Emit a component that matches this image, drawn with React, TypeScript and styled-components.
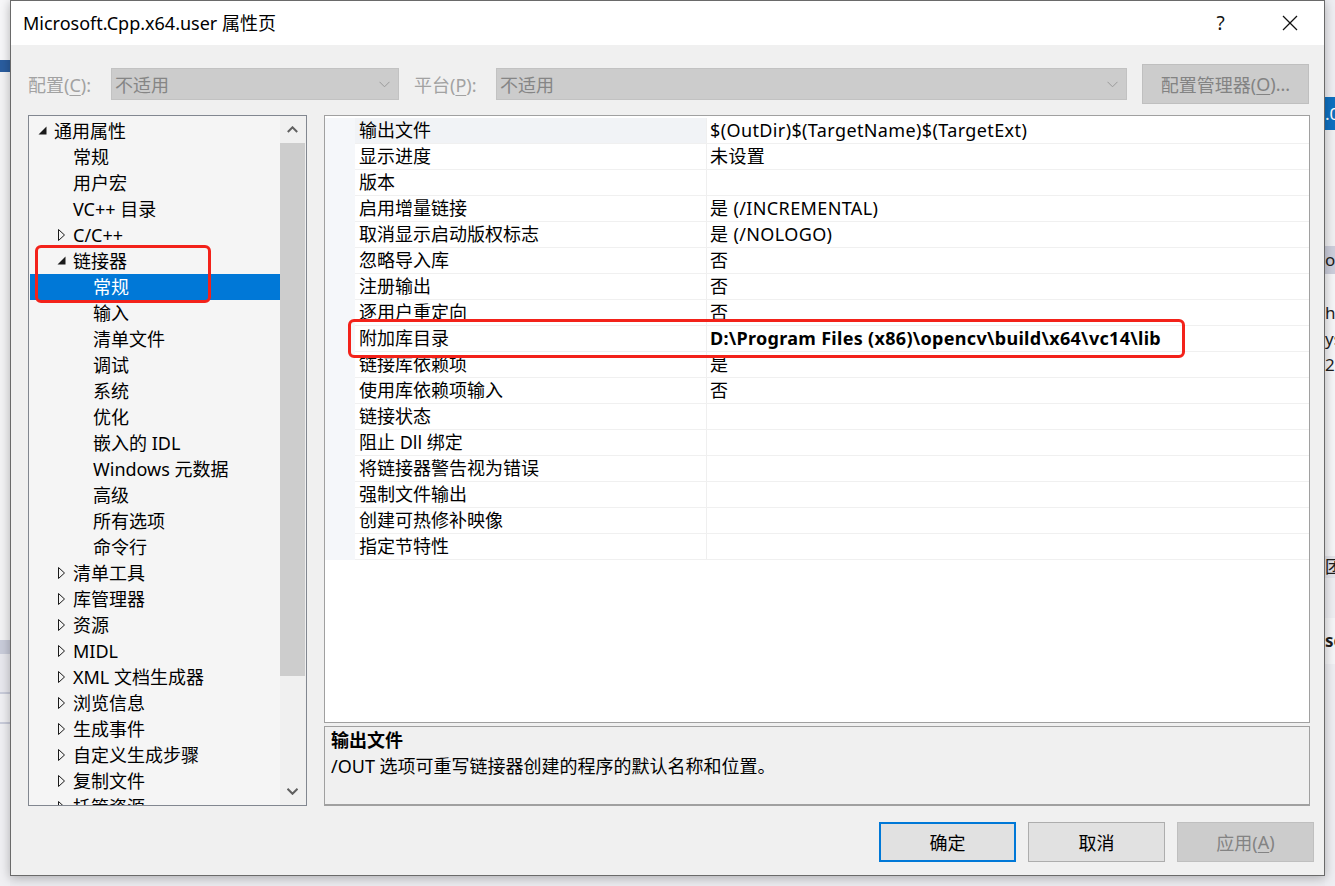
import React from 'react';
import styled, { createGlobalStyle } from 'styled-components';

const Global = createGlobalStyle`
  html, body { margin: 0; padding: 0; }
  body {
    background: #eeeef2;
    font-family: "Noto Sans", "Noto Sans CJK SC", sans-serif;
    font-size: 18px;
    color: #000;
    overflow: hidden;
  }
  * { box-sizing: border-box; }
`;

const Screen = styled.div`
  width: 1335px;
  height: 886px;
  display: flex;
  align-items: flex-start;
  overflow: hidden;
  background: #ececf0;
`;

const LeftStrip = styled.div`
  width: 10px;
  height: 886px;
  flex: none;
  display: flex;
  flex-direction: column;
  background: #f3f3f5;
`;

const StripBand = styled.div<{ $h: number; $bg: string; $color?: string; $bold?: boolean }>`
  height: ${p => p.$h}px;
  flex: none;
  background: ${p => p.$bg};
  color: ${p => p.$color || '#1e1e1e'};
  font-weight: ${p => (p.$bold ? 700 : 400)};
  font-size: 17px;
  line-height: ${p => p.$h}px;
  overflow: hidden;
  white-space: nowrap;
`;

const RightStrip = styled.div`
  flex: 1;
  height: 886px;
  display: flex;
  flex-direction: column;
  background: #eeeef2;
  overflow: hidden;
`;

const Dialog = styled.div`
  width: 1315px;
  height: 876px;
  flex: none;
  border: 1px solid #6a6a6a;
  background: #f0f0f0;
  display: flex;
  flex-direction: column;
  box-shadow: 0 2px 10px rgba(0, 0, 0, 0.28);
  position: relative;
  z-index: 1;
`;

const TitleBar = styled.div`
  height: 44px;
  flex: none;
  background: #ffffff;
  display: flex;
  align-items: center;
  padding-left: 12px;
`;

const Title = styled.div`
  flex: 1;
  font-size: 18px;
  line-height: 44px;
  white-space: nowrap;
`;

const CaptionButton = styled.div`
  width: 69px;
  height: 44px;
  display: flex;
  align-items: center;
  justify-content: center;
  font-size: 19px;
  color: #111;
`;

const ConfigRow = styled.div`
  height: 40px;
  margin-top: 19px;
  flex: none;
  display: flex;
  align-items: center;
  padding-left: 17px;
`;

const FieldLabel = styled.span<{ $w: number; $ml?: number }>`
  width: ${p => p.$w}px;
  margin-left: ${p => p.$ml || 0}px;
  flex: none;
  color: #a2a2a2;
  font-size: 18px;
  white-space: nowrap;
`;

const Combo = styled.div<{ $w: number }>`
  width: ${p => p.$w}px;
  height: 32px;
  flex: none;
  display: flex;
  align-items: center;
  justify-content: space-between;
  padding: 0 8px 0 3px;
  background: #cccccc;
  border: 1px solid #c2c2c2;
  color: #858585;
  font-size: 18px;
`;

const ManagerButton = styled.div`
  width: 167px;
  height: 40px;
  margin-left: 15px;
  flex: none;
  display: flex;
  align-items: center;
  justify-content: center;
  background: #cccccc;
  border: 1px solid #bfbfbf;
  color: #838383;
  font-size: 18px;
  white-space: nowrap;
`;

const Content = styled.div`
  height: 691px;
  margin-top: 11px;
  flex: none;
  display: flex;
  padding-left: 17px;
`;

const TreePanel = styled.div`
  width: 279px;
  height: 691px;
  flex: none;
  border: 1px solid #828790;
  background: #f5f5f5;
  display: flex;
  position: relative;
`;

const TreeList = styled.div`
  flex: 1;
  overflow: hidden;
  padding: 2px 0 0 1px;
`;

const TreeRow = styled.div<{ $level: number; $selected?: boolean }>`
  height: 26px;
  display: flex;
  align-items: center;
  padding-left: ${p => 7 + p.$level * 19 + (p.$level === 2 ? 1 : 0)}px;
  background: ${p => (p.$selected ? '#0078d7' : 'transparent')};
  color: ${p => (p.$selected ? '#ffffff' : '#000000')};
  font-size: 18px;
  line-height: 26px;
  white-space: nowrap;
`;

const Expander = styled.span`
  width: 17px;
  height: 26px;
  flex: none;
  display: flex;
`;

const ScrollBar = styled.div`
  width: 26px;
  flex: none;
  background: #f0f0f0;
  display: flex;
  flex-direction: column;
  align-items: flex-start;
`;

const ScrollArrow = styled.div`
  width: 25px;
  height: 27px;
  flex: none;
  display: flex;
  align-items: center;
  justify-content: center;
`;

const Thumb = styled.div`
  width: 25px;
  height: 533px;
  flex: none;
  background: #cdcdcd;
`;

const Spacer = styled.div`
  flex: 1;
`;

const Annotation = styled.div<{ $l: number; $t: number; $w: number; $h: number }>`
  position: absolute;
  left: ${p => p.$l}px;
  top: ${p => p.$t}px;
  width: ${p => p.$w}px;
  height: ${p => p.$h}px;
  border: 3px solid #f3221a;
  border-radius: 6px;
  pointer-events: none;
`;

const RightColumn = styled.div`
  width: 986px;
  margin-left: 17px;
  flex: none;
  display: flex;
  flex-direction: column;
  gap: 3px;
`;

const Grid = styled.div`
  height: 608px;
  flex: none;
  border: 1px solid #a0a0a0;
  background: #ffffff;
  padding-top: 2px;
  position: relative;
`;

const PropRow = styled.div`
  height: 26px;
  display: flex;
`;

const Gutter = styled.div`
  width: 30px;
  flex: none;
  background: #f5f7fa;
`;

const NameCell = styled.div<{ $selected?: boolean }>`
  width: 352px;
  flex: none;
  padding-left: 4px;
  border-right: 1px solid #efefef;
  border-bottom: 1px solid #f0f0f0;
  background: ${p => (p.$selected ? '#f1f3f6' : '#ffffff')};
  font-size: 18px;
  line-height: 25px;
  white-space: nowrap;
`;

const ValueCell = styled.div<{ $bold?: boolean }>`
  flex: 1;
  padding-left: 3px;
  border-bottom: 1px solid #f0f0f0;
  font-size: 18px;
  font-weight: ${p => (p.$bold ? 700 : 400)};
  letter-spacing: ${p => (p.$bold ? 0.3 : 0.38)}px;
  line-height: 25px;
  white-space: nowrap;
`;

const Description = styled.div`
  height: 80px;
  flex: none;
  border: 1px solid #a0a0a0;
  border-bottom: 2px solid #a0a0a0;
  background: #f0f0f0;
  padding: 0 6px;
`;

const DescTitle = styled.div`
  font-weight: 700;
  font-size: 18px;
  line-height: 26px;
`;

const DescText = styled.div`
  font-size: 18px;
  line-height: 26px;
`;

const Footer = styled.div`
  margin-top: 16px;
  height: 40px;
  flex: none;
  display: flex;
  justify-content: flex-end;
  gap: 12px;
  padding-right: 10px;
`;

const DialogButton = styled.div<{ $variant: 'default' | 'normal' | 'disabled' }>`
  width: 137px;
  height: 40px;
  display: flex;
  align-items: center;
  justify-content: center;
  font-size: 18px;
  background: ${p => (p.$variant === 'disabled' ? '#cccccc' : '#e1e1e1')};
  border: ${p =>
    p.$variant === 'default' ? '2px solid #0078d7' : p.$variant === 'normal' ? '1px solid #adadad' : '1px solid #bfbfbf'};
  color: ${p => (p.$variant === 'disabled' ? '#838383' : '#000')};
`;

const Mnemonic = styled.span`
  text-decoration: underline;
  text-underline-offset: 3px;
`;

const ChevronDown = ({ color = '#9a9a9a', w = 11, sw = 1 }: { color?: string; w?: number; sw?: number }) => (
  <svg width={w} height={7} viewBox="0 0 11 7">
    <polyline points="0.5,0.8 5.5,5.8 10.5,0.8" fill="none" stroke={color} strokeWidth={sw} />
  </svg>
);

const ChevronUp = () => (
  <svg width={11} height={7} viewBox="0 0 11 7">
    <polyline points="0.8,6 5.5,1.3 10.2,6" fill="none" stroke="#606060" strokeWidth={2} />
  </svg>
);

const CloseIcon = () => (
  <svg width={16} height={16} viewBox="0 0 16 16">
    <line x1="1" y1="1" x2="15" y2="15" stroke="#111" strokeWidth={1.2} />
    <line x1="15" y1="1" x2="1" y2="15" stroke="#111" strokeWidth={1.2} />
  </svg>
);

const OpenTriangle = () => (
  <svg width={17} height={26} viewBox="0 0 17 26">
    <polygon points="1.5,16.5 9.5,8.5 9.5,16.5" fill="#1a1a1a" />
  </svg>
);

const ClosedTriangle = () => (
  <svg width={17} height={26} viewBox="0 0 17 26">
    <polygon points="2.5,7.5 8.5,13 2.5,18.5" fill="none" stroke="#1a1a1a" strokeWidth={1} />
  </svg>
);

type TreeItem = { t: string; l: number; e?: 'open' | 'closed'; sel?: boolean };

const tree: TreeItem[] = [
  { t: '通用属性', l: 0, e: 'open' },
  { t: '常规', l: 1 },
  { t: '用户宏', l: 1 },
  { t: 'VC++ 目录', l: 1 },
  { t: 'C/C++', l: 1, e: 'closed' },
  { t: '链接器', l: 1, e: 'open' },
  { t: '常规', l: 2, sel: true },
  { t: '输入', l: 2 },
  { t: '清单文件', l: 2 },
  { t: '调试', l: 2 },
  { t: '系统', l: 2 },
  { t: '优化', l: 2 },
  { t: '嵌入的 IDL', l: 2 },
  { t: 'Windows 元数据', l: 2 },
  { t: '高级', l: 2 },
  { t: '所有选项', l: 2 },
  { t: '命令行', l: 2 },
  { t: '清单工具', l: 1, e: 'closed' },
  { t: '库管理器', l: 1, e: 'closed' },
  { t: '资源', l: 1, e: 'closed' },
  { t: 'MIDL', l: 1, e: 'closed' },
  { t: 'XML 文档生成器', l: 1, e: 'closed' },
  { t: '浏览信息', l: 1, e: 'closed' },
  { t: '生成事件', l: 1, e: 'closed' },
  { t: '自定义生成步骤', l: 1, e: 'closed' },
  { t: '复制文件', l: 1, e: 'closed' },
  { t: '托管资源', l: 1, e: 'closed' },
];

type Prop = { n: string; v?: string; bold?: boolean };

const props: Prop[] = [
  { n: '输出文件', v: '$(OutDir)$(TargetName)$(TargetExt)' },
  { n: '显示进度', v: '未设置' },
  { n: '版本' },
  { n: '启用增量链接', v: '是 (/INCREMENTAL)' },
  { n: '取消显示启动版权标志', v: '是 (/NOLOGO)' },
  { n: '忽略导入库', v: '否' },
  { n: '注册输出', v: '否' },
  { n: '逐用户重定向', v: '否' },
  { n: '附加库目录', v: 'D:\\Program Files (x86)\\opencv\\build\\x64\\vc14\\lib', bold: true },
  { n: '链接库依赖项', v: '是' },
  { n: '使用库依赖项输入', v: '否' },
  { n: '链接状态' },
  { n: '阻止 Dll 绑定' },
  { n: '将链接器警告视为错误' },
  { n: '强制文件输出' },
  { n: '创建可热修补映像' },
  { n: '指定节特性' },
];

export default function App() {
  return (
    <>
      <Global />
      <Screen>
        <LeftStrip>
          <StripBand $h={60} $bg="#f7f7f9" />
          <StripBand $h={12} $bg="#2a5d9f" />
          <StripBand $h={568} $bg="#f3f3f5" />
          <StripBand $h={14} $bg="#c9ccda" />
          <StripBand $h={38} $bg="#e8e8ee" />
          <StripBand $h={2} $bg="#c9ccda" />
          <StripBand $h={28} $bg="#f0f0f3" />
          <StripBand $h={2} $bg="#c9ccda" />
          <StripBand $h={162} $bg="#f0f0f3" />
        </LeftStrip>

        <Dialog>
          <TitleBar>
            <Title>Microsoft.Cpp.x64.user 属性页</Title>
            <CaptionButton>?</CaptionButton>
            <CaptionButton>
              <CloseIcon />
            </CaptionButton>
          </TitleBar>

          <ConfigRow>
            <FieldLabel $w={83}>
              配置(<Mnemonic>C</Mnemonic>):
            </FieldLabel>
            <Combo $w={288}>
              <span>不适用</span>
              <ChevronDown />
            </Combo>
            <FieldLabel $w={82} $ml={15}>
              平台(<Mnemonic>P</Mnemonic>):
            </FieldLabel>
            <Combo $w={631}>
              <span>不适用</span>
              <ChevronDown />
            </Combo>
            <ManagerButton>
              配置管理器(<Mnemonic>O</Mnemonic>)...
            </ManagerButton>
          </ConfigRow>

          <Content>
            <TreePanel>
              <TreeList>
                {tree.map((it, i) => (
                  <TreeRow key={i} $level={it.l} $selected={it.sel}>
                    <Expander>
                      {it.e === 'open' && <OpenTriangle />}
                      {it.e === 'closed' && <ClosedTriangle />}
                    </Expander>
                    {it.t}
                  </TreeRow>
                ))}
              </TreeList>
              <ScrollBar>
                <ScrollArrow>
                  <ChevronUp />
                </ScrollArrow>
                <Thumb />
                <Spacer />
                <ScrollArrow>
                  <ChevronDown color="#606060" sw={2} />
                </ScrollArrow>
              </ScrollBar>
              <Annotation $l={6} $t={129} $w={176} $h={58} />
            </TreePanel>

            <RightColumn>
              <Grid>
                {props.map((p, i) => (
                  <PropRow key={i}>
                    <Gutter />
                    <NameCell $selected={i === 0}>{p.n}</NameCell>
                    <ValueCell $bold={p.bold}>{p.v || ''}</ValueCell>
                  </PropRow>
                ))}
                <Annotation $l={23} $t={203} $w={837} $h={39} />
              </Grid>
              <Description>
                <DescTitle>输出文件</DescTitle>
                <DescText>/OUT 选项可重写链接器创建的程序的默认名称和位置。</DescText>
              </Description>
            </RightColumn>
          </Content>

          <Footer>
            <DialogButton $variant="default">确定</DialogButton>
            <DialogButton $variant="normal">取消</DialogButton>
            <DialogButton $variant="disabled">
              应用(<Mnemonic>A</Mnemonic>)
            </DialogButton>
          </Footer>
        </Dialog>

        <RightStrip>
          <StripBand $h={97} $bg="#eeeef2" />
          <StripBand $h={33} $bg="#0e70c0" $color="#ffffff">.0</StripBand>
          <StripBand $h={116} $bg="#f0f0f2" />
          <StripBand $h={28} $bg="#cccedb">o.</StripBand>
          <StripBand $h={26} $bg="#f5f5f7" />
          <StripBand $h={26} $bg="#f5f5f7">ha</StripBand>
          <StripBand $h={26} $bg="#f5f5f7">ys</StripBand>
          <StripBand $h={26} $bg="#f5f5f7">2</StripBand>
          <StripBand $h={178} $bg="#f5f5f7" />
          <StripBand $h={22} $bg="#e4e4ea">团</StripBand>
          <StripBand $h={40} $bg="#eeeef2" />
          <StripBand $h={46} $bg="#f5f5f7" $bold>se</StripBand>
          <StripBand $h={222} $bg="#eeeef2" />
        </RightStrip>
      </Screen>
    </>
  );
}
